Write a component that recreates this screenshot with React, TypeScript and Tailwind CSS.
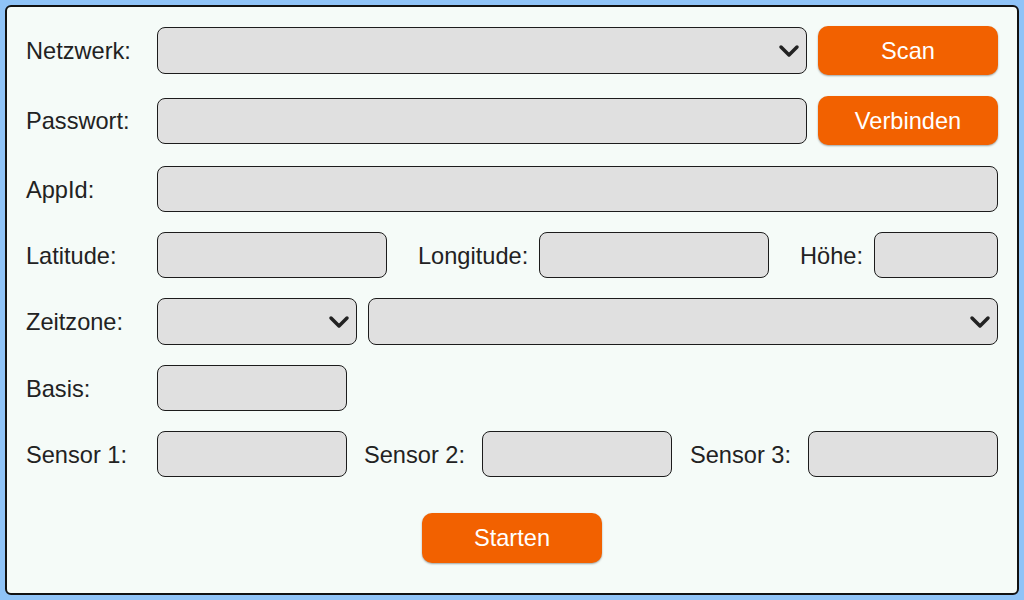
import React from "react";

const font = { fontFamily: '"Liberation Sans", Arial, sans-serif' };

function Chevron() {
  return (
    <svg width="22" height="14" viewBox="0 0 22 14" className="shrink-0">
      <polyline
        points="3,3 11,11 19,3"
        fill="none"
        stroke="#222"
        strokeWidth="3.5"
        strokeLinecap="round"
        strokeLinejoin="round"
      />
    </svg>
  );
}

function Field({ className = "" }: { className?: string }) {
  return (
    <div
      className={`h-[46px] rounded-lg border border-[#1c1c1c] bg-[#e0e0e0] ${className}`}
    />
  );
}

function Select({ className = "" }: { className?: string }) {
  return (
    <div
      className={`flex h-[47px] items-center justify-end rounded-lg border border-[#1c1c1c] bg-[#e0e0e0] pr-[6px] ${className}`}
    >
      <Chevron />
    </div>
  );
}

function Button({ label, className = "" }: { label: string; className?: string }) {
  return (
    <button
      className={`flex h-[49px] w-[180px] items-center justify-center rounded-[10px] bg-[#f26100] pt-[2px] text-[23.6px] text-white shadow-[0_1px_2px_rgba(0,0,0,0.35)] ${className}`}
    >
      {label}
    </button>
  );
}

function Label({ text, className = "w-[131px]" }: { text: string; className?: string }) {
  return (
    <span className={`shrink-0 pt-[3px] text-[23.6px] text-[#222] ${className}`}>{text}</span>
  );
}

export default function App() {
  return (
    <div className="h-[600px] w-[1024px] bg-[#8fc3f7] p-[5px]" style={font}>
      <div className="flex h-full w-full flex-col rounded-md border-2 border-[#111] bg-[#f5fbf8] px-[19px] pt-[19px]">
        {/* Netzwerk */}
        <div className="flex items-center">
          <Label text="Netzwerk:" />
          <Select className="flex-1" />
          <Button label="Scan" className="ml-[11px]" />
        </div>

        {/* Passwort */}
        <div className="mt-[21px] flex items-center">
          <Label text="Passwort:" />
          <Field className="flex-1" />
          <Button label="Verbinden" className="ml-[11px]" />
        </div>

        {/* AppId */}
        <div className="mt-[21px] flex items-center">
          <Label text="AppId:" />
          <Field className="flex-1" />
        </div>

        {/* Koordinaten */}
        <div className="mt-[20px] flex items-center">
          <Label text="Latitude:" />
          <Field className="w-[230px]" />
          <Label text="Longitude:" className="ml-[31px] w-[121px]" />
          <Field className="w-[230px]" />
          <Label text="Höhe:" className="ml-[31px] w-[74px]" />
          <Field className="flex-1" />
        </div>

        {/* Zeitzone */}
        <div className="mt-[20px] flex items-center">
          <Label text="Zeitzone:" />
          <Select className="w-[200px]" />
          <Select className="ml-[11px] flex-1" />
        </div>

        {/* Basis */}
        <div className="mt-[20px] flex items-center">
          <Label text="Basis:" />
          <Field className="w-[190px]" />
        </div>

        {/* Sensoren */}
        <div className="mt-[20px] flex items-center">
          <Label text="Sensor 1:" />
          <Field className="w-[190px]" />
          <Label text="Sensor 2:" className="ml-[17px] w-[118px]" />
          <Field className="w-[190px]" />
          <Label text="Sensor 3:" className="ml-[18px] w-[118px]" />
          <Field className="flex-1" />
        </div>

        <div className="mt-[36px] flex justify-center">
          <Button label="Starten" className="h-[50px]" />
        </div>
      </div>
    </div>
  );
}
